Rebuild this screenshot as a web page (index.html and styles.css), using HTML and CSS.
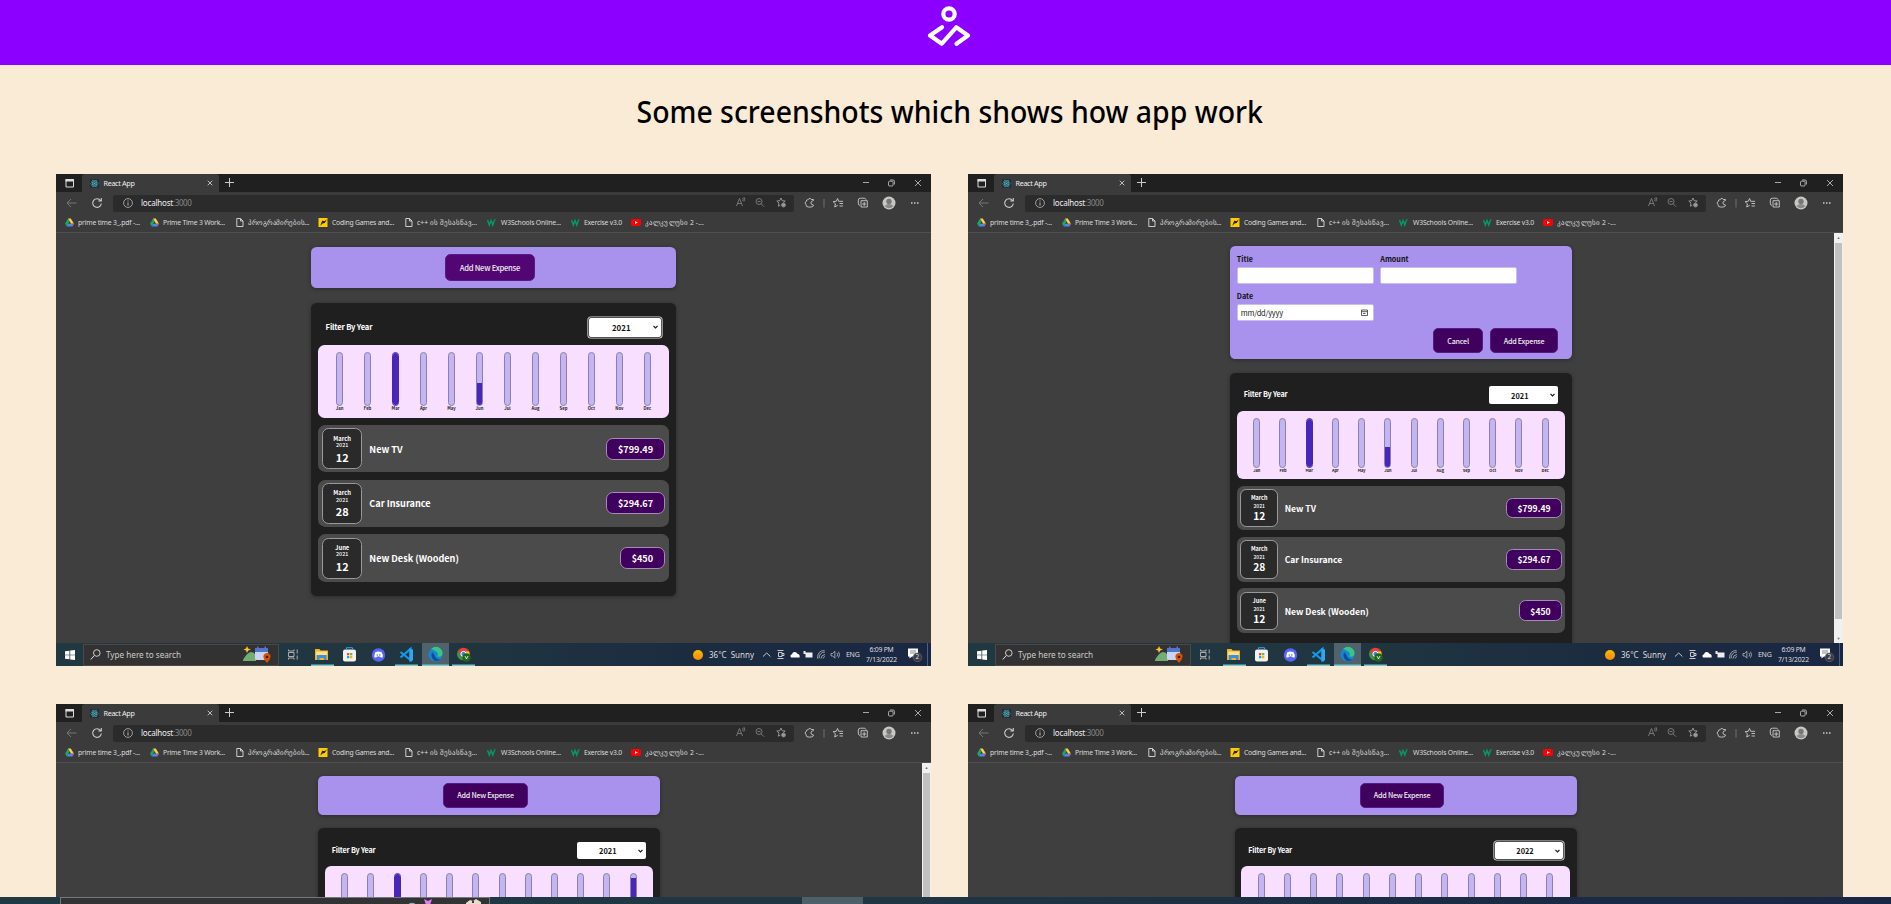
FILE: index.html
```
<!DOCTYPE html>
<html lang="en">
<head>
<meta charset="utf-8">
<title>Expense tracker</title>
<link rel="stylesheet" href="styles.css">
</head>
<body>
<svg class="defs" aria-hidden="true">
  <symbol id="drive" viewBox="0 0 10 9"><path fill="#1fa463" d="M3.4 0 5 3 2 9 0 6z"/><path fill="#ffd04b" d="M3.4 0h3L10 6H6.7z"/><path fill="#4688f4" d="M3.5 6H10L8.3 9H2z"/><path fill="#ea4335" d="M8 6h2L8.5 8.7z"/></symbol>
  <symbol id="doc" viewBox="0 0 8 9"><path fill="none" stroke="#ddd" stroke-width=".9" d="M.8.5h3.7L7 3v5.500H.8zM4.500.5V3H7"/></symbol>
  <symbol id="game" viewBox="0 0 10 10"><path fill="#fc0" d="M0 0h10v10H0z"/><path fill="#252525" d="M2 8.500 4 3l3 .4L9.500 1.500 7 5.500 4.500 6z"/></symbol>
  <symbol id="w3" viewBox="0 0 9 8"><path fill="none" stroke="#059862" stroke-width="1.500" d="m.5 1.500 1.800 5L4 2l1.800 4.500L7.300 2M7.300 1.200h1.200"/></symbol>
  <symbol id="yt" viewBox="0 0 10 8"><rect y=".5" width="10" height="7" rx="2" fill="#f00"/><path fill="#fff" d="m4 2.500 2.800 1.500L4 5.500z"/></symbol>
  <symbol id="tabicons" viewBox="0 0 50 18"><path fill="none" stroke="#ddd" stroke-width="1" d="M10 5.500h7.500v7.500H10z"/><path fill="#ddd" d="M9.500 5h8.500v2.500H9.500z"/></symbol>
  <symbol id="react" viewBox="0 0 10 10"><rect width="10" height="10" rx="1" fill="#222d31"/><g fill="none" stroke="#4fa9bd" stroke-width=".7"><ellipse cx="5" cy="5" rx="4.200" ry="1.700"/><ellipse cx="5" cy="5" rx="4.200" ry="1.700" transform="rotate(60 5 5)"/><ellipse cx="5" cy="5" rx="4.200" ry="1.700" transform="rotate(120 5 5)"/></g><circle cx="5" cy="5" r=".9" fill="#4fa9bd"/></symbol>
  <symbol id="wincontrols" viewBox="0 0 80 18"><g fill="none" stroke="#ccc" stroke-width=".8"><path d="M12 8.500h6M64 6l6 6M70 6l-6 6"/><rect x="37.500" y="7.200" width="4.600" height="4.800" rx="1"/><path d="M39 6h3.200q1.200 0 1.200 1.200v3.300"/></g></symbol>
  <symbol id="navicons" viewBox="0 0 57 22"><path fill="none" stroke="#777" d="M20.500 11h-9.500m4-4-4 4 4 4"/><path fill="none" stroke="#ccc" stroke-width="1.100" d="M44.500 8.500a4.300 4.300 0 1 0 .8 3M45.300 6v3h-3"/></symbol>
  <symbol id="info" viewBox="0 0 10 10"><circle cx="5" cy="5" r="4.400" fill="none" stroke="#bbb" stroke-width=".8"/><path stroke="#bbb" d="M5 4.500v3M5 2.500v1"/></symbol>
  <symbol id="addricons" viewBox="0 0 60 17"><g fill="none" stroke="#888" stroke-width=".8"><path d="m2.500 12 3-7.500 3 7.500M3.700 9.500h3.600M8.500 4q1.500 1.500 0 3M9.800 3q2 2.300 0 4.500"/><circle cx="25" cy="7.500" r="3"/><path d="m27 9.700 3 3M23.500 7.500h3"/><path stroke="#aaa" d="m47 4 1.200 2.700 3 .3-2 1.500M47 4l-1.200 2.700-3 .3 2.200 2-.7 3.200 2-1"/><circle cx="49.500" cy="11" r="2" fill="#999"/></g></symbol>
  <symbol id="toolicons" viewBox="0 0 137 22"><g fill="none" stroke="#ccc" stroke-width=".9"><path d="M19.500 8.500V7.500H17.200q-1-2.800-3 0-2 .2-2.200 2.200-2 1.300 0 2.800 0 2.500 2.200 2.500h3q2 0 2.300-2-2.600-.2-2.600-2.100 0-1.900 2.600-2.400z"/><path stroke="#777" d="M30 7v8.500"/><path d="m43.500 6.500 1.200 2.800H49M43.500 6.500l-1.200 2.800-3.200.3 2.300 2.200-.7 3.200 3-1.700M45.500 11.500H49M45.500 14H49"/><path d="M66 13.500q-2-.5-1.700-2.500V8q.3-1.800 2-1.800h4q1.200 0 1.700 1.500M67 8.700h6.300v6.300H67zM70.200 10v4M68.200 12h4"/></g><circle cx="95" cy="11" r="6.500" fill="#c9c7c4"/><circle cx="95" cy="9.500" r="2.700" fill="#777"/><path fill="#8a8a8a" d="M90.500 14q4.500-4 9 0-4.500 4.500-9 0z"/><path stroke="#ccc" stroke-width="1.500" stroke-dasharray="1.500 1.500" d="M117 11h8"/></symbol>
  <symbol id="apps" viewBox="0 0 210 23">
    <g fill="none" stroke="#bbb" stroke-width=".9"><path d="M9.500 6.500V8h5.500V6.500M9.500 16.500V15h5.500v1.500M9.500 9.500h5.500v4H9.500zM18.200 6.500v4M18.200 12.500v4"/></g>
    <path fill="#f0b22d" d="M36 6h4.500l1 1.500H49V17H36z"/><path fill="#ffe08a" d="M37 8.500h11V12H37z"/><path fill="#3b91d9" d="M38 12h9.500v5H45v-2h-4.500v2H38z"/>
    <rect x="64" y="6.500" width="13" height="12" rx="2" fill="#f1f1f1"/><path fill="none" stroke="#37a3df" d="M67.500 7V4.700h6V7"/><path fill="#e74c2c" d="M68 10h2.300v2.300H68z"/><path fill="#79b82a" d="M71 10h2.300v2.300H71z"/><path fill="#229fe8" d="M68 13h2.300v2.300H68z"/><path fill="#f7b900" d="M71 13h2.300v2.300H71z"/>
    <circle cx="99.500" cy="12" r="6.700" fill="#5865f2"/><path fill="#fff" d="M96.500 9q3-1 6 0 1.500 2.500 1.300 5-1.500 1-2.300.3l-.5-.8h-3l-.5.800q-1 .6-2.300-.3 0-3 1.300-5z"/><circle cx="98.200" cy="12" r=".8" fill="#5865f2"/><circle cx="100.800" cy="12" r=".8" fill="#5865f2"/>
    <path fill="none" stroke="#1497e5" stroke-width="2.200" d="m121.500 9 10 8V6l-10 8.500"/><path fill="#2aa9f2" d="m130.500 5 3.500 1.700v10.600L130.500 19z"/>
    <path fill="#50626b" d="M143 0h27v23h-27z"/><circle cx="156.500" cy="11.500" r="7" fill="#1785d2"/><path fill="#35c78a" d="M152 6q5-4.500 10 0 2.500 3 1.300 6-1.500 2.500-5 1.500 1.500-3-.8-4.700-2.500-1.500-5.500-2.800z"/><path fill="#104e94" d="M153 9q-2 6 3 9 3.500.5 5.500-2-5 1-6-4z"/>
    <circle cx="184.500" cy="11" r="6.300" fill="#e04436"/><path fill="#249c4c" d="m179 8 5.500 9.300q-6-.3-6.300-6z"/><path fill="#fbc723" d="M190 8.500q2 5.500-3.500 8.500l-2-3 2.500-5.500z"/><circle cx="184.500" cy="11" r="2.600" fill="#3b7fe6" stroke="#fff"/><circle cx="187.500" cy="14.500" r="4.200" fill="#20661d"/><path fill="none" stroke="#fff" stroke-width=".8" d="m186 13 1.500 3 1.500-3"/>
    <g fill="#76c9ce"><path d="M32 21.500h23V23H32zM116 21.500h23V23h-23zM143 21.500h27V23h-27zM173 21.500h23V23h-23z"/></g>
  </symbol>
  <symbol id="highlights" viewBox="0 0 28 18"><path fill="#73ad72" d="M0 14q7-13 13-5v6H0z"/><path fill="#f7c52d" d="m4 0 1.200 2.500L8 3.500 5.200 4.500 4 7 3 4.500.5 3.500 3 2.500z"/><rect x="12" y="2" width="13" height="12" rx="1.500" fill="#c8d4f0"/><path fill="#5274cc" d="M12 2h13v4H12zM14 .5h1.500v3H14zM21.500.5H23v3h-1.500z"/><path fill="#d4500c" d="M24 7a3.700 3.700 0 0 1 3.600 4q-.5 3-3.600 6-3.100-3-3.600-6A3.700 3.700 0 0 1 24 7z"/><circle cx="24" cy="11" r="1.300" fill="#5d1705"/></symbol>
  <symbol id="win" viewBox="0 0 10 10"><path fill="#fff" d="M0 1.300 4.500.7v4H0zM5.200.6 10 0v4.700H5.200zM0 5.300h4.500v4L0 8.700zM5.200 5.300H10V10l-4.800-.6z"/></symbol>
  <symbol id="search" viewBox="0 0 11 11"><circle cx="6.800" cy="4" r="3.300" fill="none" stroke="#ddd" stroke-width=".9"/><path stroke="#ddd" d="m4.300 6.500-3.500 4"/></symbol>
  <symbol id="tray" viewBox="0 0 78 23"><g fill="none" stroke="#ddd" stroke-width=".9"><path d="m0 13.500 3.700-3.500 3.700 3.500M14.500 7.500h6M14.500 15.500h6M15.500 9.500h3.500v4h-3.500zM19 10.500h2v2h-2"/><path stroke="#aaa" d="M56 15.500q0-6 6-6.500M58 15.500q0-3.500 4-4M60 15.500q0-1.500 2-2M54.500 15.500q0-8 7-8"/><path stroke="#bbb" stroke-width=".8" d="M68 10.500h1.700l2.200-2.300v7l-2.200-2.300H68zM74 10q1.300 1.800 0 3.500M75.500 8.700q2 3 0 6"/></g><path fill="#fff" d="M28 14.500q-1.500-2.500 1-3.200.8-3 3.800-2 1.500.6 1.800 1.800 2.500.3 2 3.400z"/><path fill="#eee" d="M42.500 9.500h7v5h-7zM40.500 8h2v3h-2z"/></symbol>
  <symbol id="note" viewBox="0 0 15 14"><path fill="#fff" d="M0 .5h10v8H4L1.500 10.500V8.500H0z"/><path stroke="#556" stroke-width=".7" d="M2 3h6M2 5h6"/><circle cx="9.500" cy="9.300" r="4.400" fill="#383d46" stroke="#777" stroke-width=".5"/></symbol>
</svg>

<header class="header">
  <svg class="logo" viewBox="0 0 44 48"><g fill="none" stroke="#fff" stroke-linecap="round" stroke-linejoin="round"><circle cx="22" cy="14" r="5.700" stroke-width="4.200"/><path stroke-width="4.200" d="M15 27.300 3 35.500l11.800 8.200L29.300 27.300 41 35.500l-11.500 8.200"/></g></svg>
</header>
<main>
  <h1 class="title"><span data-scale="626">Some screenshots which shows how app work</span></h1>
  <div class="gallery" id="gallery"></div>
</main>
<div class="desktop-bar">
  <div class="desktop-search"><svg viewBox="0 0 90 7"><path fill="#8caec5" d="M13 5.500q3-1.500 6 0V7h-6z"/><path fill="#e27df0" d="M28 1l4 2 4-2-2 6h-4z"/><path fill="#e8dccd" d="M70 5l4-3 3 1 3-2 5 3v3H70z"/><path fill="#4a3a2c" d="M76 3h2v2h-2z"/></svg></div>
  <div class="desktop-active"></div>
</div>
<script src="script.js"></script>
</body>
</html>
```

FILE: styles.css
```
* { box-sizing: border-box; }
html, body { height: 904px; overflow: hidden; }
body { margin: 0; background: #faebd7; font-family: "Noto Sans", "Open Sans", sans-serif; }
.defs { display: none; }
svg { display: block; flex: none; }
main { height: 839px; overflow: hidden; }
.header { height: 65px; background: #8c00ff; display: flex; justify-content: center; padding-left: 7px; }
.logo { width: 44px; height: 48px; }
.title { margin: 0; padding-left: 8px; height: 109px; padding-top: 23px; text-align: center; font-size: 31px; line-height: 46px; font-weight: 500; color: #000; white-space: nowrap; }
.title span { display: inline-block; }
.gallery { display: grid; grid-template-columns: 875px 875px; gap: 38px 37px; padding-left: 56px; }

.shot { height: 492px; background: #3f3f3f; overflow: hidden; display: flex; flex-direction: column; white-space: nowrap; color: #ddd; }
.tabs { height: 18px; flex: none; background: #202020; display: flex; }
.tabs-icon { width: 26px; height: 18px; overflow: hidden; }
.tabs-icon svg { width: 50px; height: 18px; }
.tab { width: 137px; background: #3b3b3b; border-radius: 3px 3px 0 0; display: flex; align-items: center; padding-left: 8px; font-size: 7.2px; color: #eee; }
.tab svg { width: 9px; height: 9px; margin-right: 4.5px; }
.tab .tab-close { width: 6px; height: 6px; margin-left: auto; margin-right: 6px; }
.plus { width: 9px; height: 9px; margin: 4px 0 0 6px; background: linear-gradient(#ccc, #ccc) center/9px 1px no-repeat, linear-gradient(#ccc, #ccc) center/1px 9px no-repeat; }
.tabs .controls { width: 80px; height: 18px; margin-left: auto; }
.toolbar { height: 22px; flex: none; background: #3b3b3b; display: flex; align-items: center; }
.nav { width: 57px; height: 22px; }
.address { flex: 1; height: 17px; background: #2b2b2b; border-radius: 2px; display: flex; align-items: center; padding-left: 10px; font-size: 8px; line-height: 10px; padding-bottom: 1px; color: #eee; }
.address .i { width: 10px; height: 10px; margin-right: 8px; }
.port { color: #888; }
.address .a { width: 60px; height: 17px; margin-left: auto; }
.tools { width: 137px; height: 22px; }
.bookmarks { height: 18.500px; flex: none; background: #3b3b3b; border-bottom: 1px solid #505050; display: flex; align-items: center; padding-left: 9px; font-size: 6.800px; line-height: 9px; }
.bookmark { display: flex; align-items: center; flex: none; }
.bookmark svg { height: 9px; }
.page { flex: 1; min-height: 0; display: flex; overflow: hidden; }
.taskbar { height: 23px; flex: none; background: linear-gradient(90deg, #203840, #213540 45%, #1b2c40 72%, #1a2744); display: flex; align-items: center; }
.start { width: 27px; padding-left: 9px; }
.start svg { width: 10px; height: 10px; }
.search { width: 196px; height: 22px; background: #323232; border: 1px solid #494949; display: flex; align-items: center; padding-left: 6px; font-size: 8.200px; color: #ccc; }
.search .m { width: 11px; height: 11px; margin-right: 5px; }
.search .h { width: 28px; height: 18px; margin: 0 7px 0 auto; }
.apps { width: 210px; height: 23px; }
.weather { margin-left: auto; display: flex; align-items: center; font-size: 8px; width: 70px; color: #ddd; }
.sun { width: 10px; height: 10px; border-radius: 50%; background: linear-gradient(#fbbc04, #f68b08); margin-right: 6px; }
.tray { width: 78px; height: 23px; }
.lang { font-size: 7px; width: 25px; padding-left: 5px; }
.clock { width: 31px; font-size: 6.800px; line-height: 10px; text-align: center; display: flex; flex-direction: column; align-items: center; }
.note { margin-left: 11px; width: 20px; border-right: 1px solid #536078; margin-right: 3px; height: 23px; display: grid; align-items: center; }
.note svg { width: 15px; height: 14px; grid-area: 1/1; }
.note span { grid-area: 1/1; font-size: 6.500px; line-height: 14px; padding: 4px 0 0 7.500px; }
.scroll { width: 9px; background: #f1f1f1; display: flex; flex-direction: column; font-size: 4px; line-height: 9px; text-align: center; color: #777; flex: none; }
.thumb { background: #c1c1c1; margin: 1px; height: 376px; }
.scroll .down { margin-top: auto; }

.app { flex: 1; font-family: "Noto Sans CJK JP", "Noto Sans", sans-serif; font-weight: 700; display: flex; flex-direction: column; align-items: center; color: #fff; padding-top: calc(var(--r) * 2); }
.new-expense { width: calc(var(--r) * 50); flex: none; background: #a892ee; border-radius: calc(var(--r) * .75); padding: calc(var(--r) * 1) calc(var(--r) * 2) calc(var(--r) * 1) calc(var(--r) * 1); display: flex; justify-content: center; box-shadow: 0 1px 4px rgba(0,0,0,.35); margin-bottom: calc(var(--r) * 2); min-height: calc(var(--r) * 5.600); align-items: center; }
.button { height: calc(var(--r) * 3.650); padding: 0 calc(var(--r) * 1.900); background: #40005d; border: 1px solid #5a1a86; border-radius: calc(var(--r) * .75); font-size: calc(var(--r) * 1.050); font-weight: 500; display: flex; align-items: center; color: #eee; }
.button.hover { background: #510674; }
.new-expense.form { display: block; height: 113px; color: #111; padding-top: 7.500px; }
.fields { display: grid; grid-template-columns: 137px 137px; column-gap: 6.500px; }
.label { font-size: 7.200px; line-height: 11px; height: 13px; }
.input { height: 17.500px; background: #fff; border: 1px solid #c9bdf2; border-radius: 2px; margin-bottom: 6.800px; display: flex; align-items: center; justify-content: space-between; padding: 0 5px 0 3px; font-size: 7.500px; font-weight: 400; color: #222; }
.input svg { width: 7px; height: 7px; }
.actions { display: flex; justify-content: flex-end; gap: 7px; padding-right: 0; }
.actions .button { height: 24.500px; font-size: 7.200px; padding: 0 13px; }
.expenses { width: calc(var(--r) * 50); flex: none; background: #1f1f1f; border-radius: calc(var(--r) * .75); padding: calc(var(--r) * 1) calc(var(--r) * 1) calc(var(--r) * 2); box-shadow: 0 1px 4px rgba(0,0,0,.35); }
.filter { height: var(--filter); display: flex; align-items: center; justify-content: space-between; padding: 0 calc(var(--r) * 1); font-size: calc(var(--r) * 1.050); }
.filter > span { padding-bottom: 2px; }
.select { width: calc(var(--r) * 10.100); height: calc(var(--r) * 2.550); background: #fff; border-radius: 2px; color: #111; display: flex; align-items: center; font-size: calc(var(--r) * 1.080); }
.select.focus { box-shadow: 0 0 0 .7px #222, 0 0 0 1.600px #ddd; width: calc(var(--r) * 9.900); }
.select svg { width: 5px; height: 4px; margin-left: auto; margin-right: 3px; }
.select span { margin-left: auto; }
.chart { height: calc(var(--r) * 10); background: #f8dfff; border-radius: calc(var(--r) * .9); padding: calc(var(--r) * 1) calc(var(--r) * 1); display: flex; justify-content: space-around; margin-bottom: calc(var(--r) * 1); }
.month { display: flex; flex-direction: column; align-items: center; width: 7px; color: #222; font-size: calc(var(--r) * .580); line-height: calc(var(--r) * .8); }
.bar { width: 7px; height: calc(var(--r) * 7.350); flex: none; border: 1px solid #8b80ad; border-radius: 4px; background: #c3b4f3; overflow: hidden; display: flex; flex-direction: column; justify-content: flex-end; }
.bar.full { border-color: #4826b9; }
.fill { background: #4826b9; }
.item { height: calc(var(--r) * 6.500); background: #4b4b4b; border-radius: calc(var(--r) * 1); margin-bottom: calc(var(--r) * 1); display: flex; align-items: center; padding: 0 calc(var(--r) * .5); }
.item:last-child { margin-bottom: 0; }
.date { width: calc(var(--r) * 5.550); height: calc(var(--r) * 5.600); border: 1px solid #999; border-radius: calc(var(--r) * .9); background: #2a2a2a; text-align: center; padding-top: calc(var(--r) * .75); margin-right: calc(var(--r) * .95); }
.date .mo { font-size: calc(var(--r) * .8); line-height: calc(var(--r) * 1); }
.date .yr { font-size: calc(var(--r) * .74); line-height: calc(var(--r) * 1.050); font-weight: 500; }
.date .dy { font-size: calc(var(--r) * 1.500); line-height: calc(var(--r) * 2.150); }
.name { font-size: calc(var(--r) * 1.250); flex: 1; }
.price { height: calc(var(--r) * 3); padding: 0 calc(var(--r) * 1.500); border: 1px solid #a58bb5; border-radius: calc(var(--r) * .95); background: #40005d; display: flex; align-items: center; font-size: calc(var(--r) * 1.250); }

.desktop-bar { position: fixed; left: 0; right: 0; bottom: 0; height: 7px; background: linear-gradient(90deg, #203943, #203743 45%, #1b2c44 75%, #1a2744); display: flex; padding-left: 60px; }
.desktop-search { width: 430px; border: 1px solid #777; border-bottom: 0; background: #323335; margin-right: 312px; padding-left: 335px; }
.desktop-search svg { width: 90px; height: 7px; }
.desktop-active { width: 61px; background: #4d606a; }
```

FILE: script.js
```
const use = (id, w, h, cls = "") => `<svg class="${cls}" width="${w}" height="${h}"><use href="#${id}" width="${w}" height="${h}"/></svg>`;
const months = ["Jan", "Feb", "Mar", "Apr", "May", "Jun", "Jul", "Aug", "Sep", "Oct", "Nov", "Dec"];

// icon, icon width, slot width, gap before text, label, label width
const bookmarks = [
  ["drive", 9, 85, 4, "prime time 3_.pdf -...", 62],
  ["drive", 9, 86, 4, "Prime Time 3 Work...", 62],
  ["doc", 8, 82, 4, "პროგრამირების...", 61],
  ["game", 10, 87, 4, "Coding Games and...", 62],
  ["doc", 8, 82, 4, "c++ ის შესასწავ...", 60],
  ["w3", 9, 84, 5, "W3Schools Online...", 60],
  ["w3", 9, 60, 4, "Exercise v3.0", 38],
  ["yt", 10, 80, 4, "კალკულუსი 2 -...", 59],
];
const expenses = [
  ["March", "12", "New TV", "$799.49"],
  ["March", "28", "Car Insurance", "$294.67"],
  ["June", "12", "New Desk (Wooden)", "$450"],
];
const shots = [
  { r: 7.3, filter: 34.4, year: 2021, focus: true, hover: true, bars: { 2: 100, 5: 41 } },
  { r: 6.84, filter: 31, year: 2021, form: true, scroll: true, bars: { 2: 100, 5: 41 } },
  { r: 6.84, filter: 30.7, year: 2021, scroll: true, bars: { 2: 100, 11: 92 } },
  { r: 6.84, filter: 30.7, year: 2022, focus: true, bars: {} },
];

const expenseForm = s => s.form
  ? `<div class="new-expense form"><div class="fields">
      <div><div class="label">Title</div><div class="input"></div></div>
      <div><div class="label">Amount</div><div class="input"></div></div>
      <div><div class="label">Date</div><div class="input"><span data-w="42">mm/dd/yyyy</span><svg viewBox="0 0 7 7"><path fill="none" stroke="#333" stroke-width=".8" d="M.5 1h6v5.500h-6zM.5 2.700h6M2 4.500h2.500"/></svg></div></div>
    </div><div class="actions"><div class="button"><span data-w="21.500">Cancel</span></div><div class="button"><span data-w="40.500">Add Expense</span></div></div></div>`
  : `<div class="new-expense"><div class="button ${s.hover ? "hover" : ""}"><span data-w="${s.r * 8.25}">Add New Expense</span></div></div>`;

const app = s => `<div class="app" style="--r:${s.r}px;--filter:${s.filter}px">${expenseForm(s)}
  <div class="expenses">
    <div class="filter"><span data-w="${s.r * 6.4}">Filter By Year</span><div class="select ${s.focus ? "focus" : ""}"><span>${s.year}</span><svg viewBox="0 0 5 4"><path fill="none" stroke="#222" stroke-width="1.200" d="m.5 1 2 2 2-2"/></svg></div></div>
    <div class="chart">${months.map((m, i) => `<div class="month"><div class="bar ${s.bars[i] === 100 ? "full" : ""}"><div class="fill" style="height:${s.bars[i] || 0}%"></div></div>${m}</div>`).join("")}</div>
    ${expenses.map(e => `<div class="item"><div class="date"><div class="mo">${e[0]}</div><div class="yr">2021</div><div class="dy">${e[1]}</div></div><div class="name">${e[2]}</div><div class="price">${e[3]}</div></div>`).join("")}
  </div></div>`;

document.getElementById("gallery").innerHTML = shots.map(s => `<section class="shot">
  <div class="tabs"><div class="tabs-icon">${use("tabicons", 50, 18)}</div>
    <div class="tab">${use("react", 9, 9)}<span data-w="31">React App</span><svg class="tab-close" viewBox="0 0 6 6"><path stroke="#ccc" stroke-width=".9" d="m.7.7 4.600 4.600M5.300.7.7 5.300"/></svg></div><div class="plus"></div>${use("wincontrols", 80, 18, "controls")}</div>
  <div class="toolbar">${use("navicons", 57, 22, "nav")}<div class="address">${use("info", 10, 10, "i")}<span data-w="32">localhost</span><span class="port" data-w="18.500">:3000</span>${use("addricons", 60, 17, "a")}</div>${use("toolicons", 137, 22, "tools")}</div>
  <div class="bookmarks">${bookmarks.map(b => `<div class="bookmark" style="width:${b[2]}px">${use(b[0], b[1], 9)}<span style="margin-left:${b[3]}px" data-w="${b[5]}">${b[4]}</span></div>`).join("")}</div>
  <div class="page">${app(s)}${s.scroll ? '<div class="scroll"><span>▲</span><div class="thumb"></div><span class="down">▼</span></div>' : ""}</div>
  <div class="taskbar"><div class="start">${use("win", 10, 10)}</div><div class="search">${use("search", 11, 11, "m")}<span data-w="75">Type here to search</span>${use("highlights", 28, 18, "h")}</div>${use("apps", 210, 23, "apps")}
    <div class="weather"><div class="sun"></div><span data-w="45">36°C&nbsp; Sunny</span></div>${use("tray", 78, 23, "tray")}<div class="lang"><span data-w="13.500">ENG</span></div>
    <div class="clock"><span data-w="24">6:09 PM</span><span data-w="31">7/13/2022</span></div><div class="note">${use("note", 15, 14)}<span>2</span></div></div>
</section>`).join("");

// Track each marked label so that it fills its measured width.
document.querySelectorAll("[data-w]").forEach(el => {
  const width = el.getBoundingClientRect().width;
  el.style.letterSpacing = (parseFloat(el.dataset.w) - width) / el.textContent.length + "px";
});
document.querySelectorAll("[data-scale]").forEach(el => {
  el.style.transform = `scaleX(${parseFloat(el.dataset.scale) / el.offsetWidth})`;
});
```
